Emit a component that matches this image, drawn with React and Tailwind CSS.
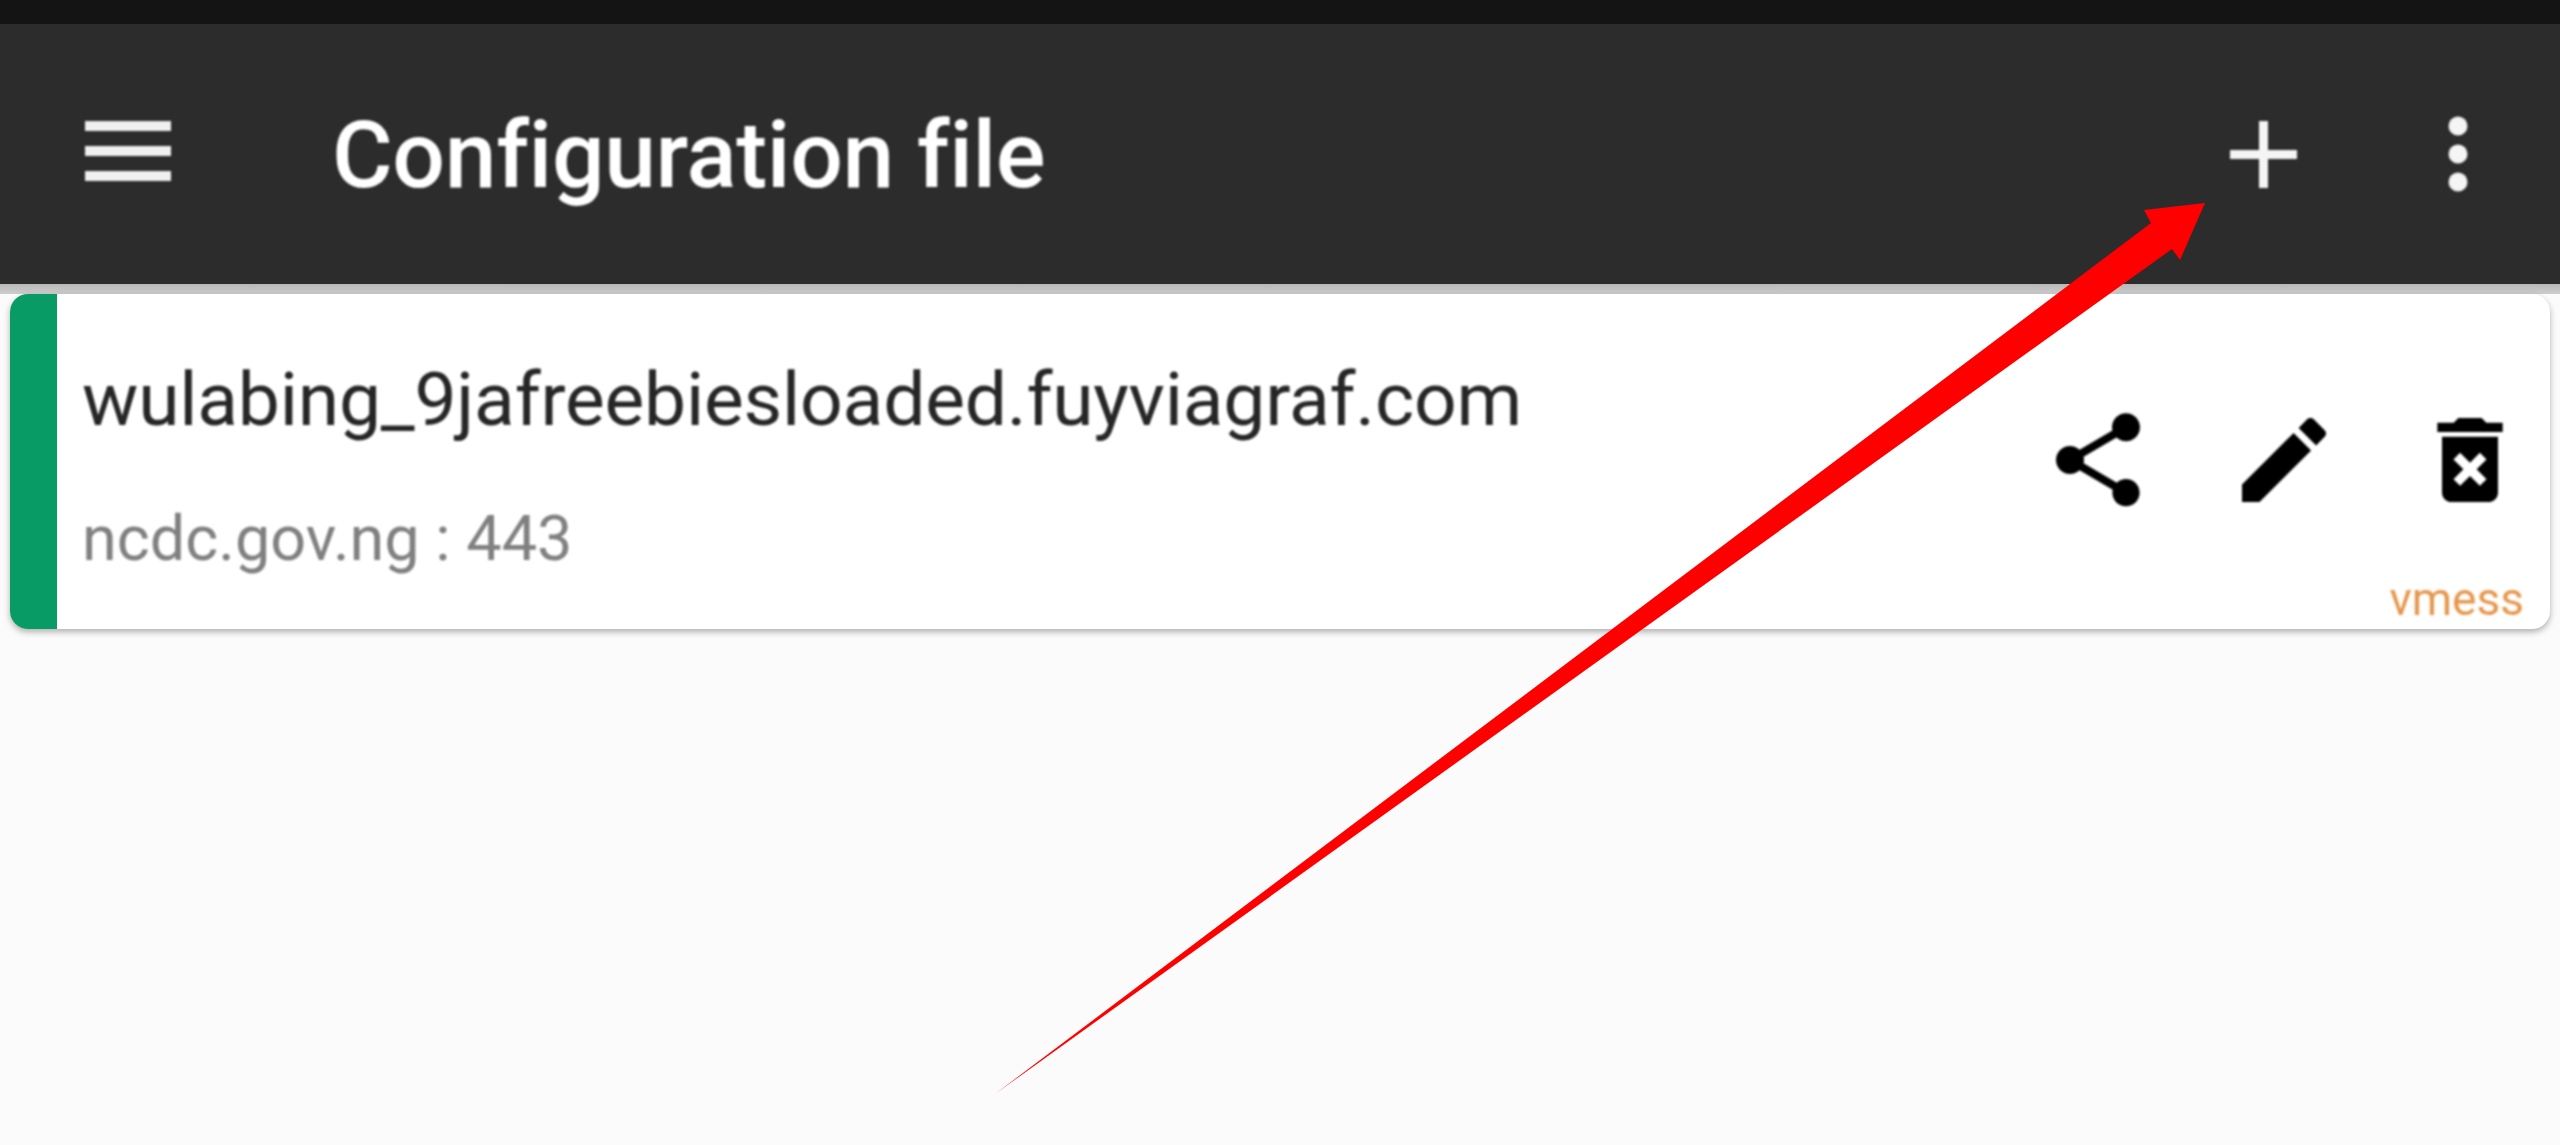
const ARROW = '2205,203 2144,210 2151,223 995,1094 2172,249 2180,260'

function ShareIcon() {
  return (
    <svg viewBox="0 0 24 24" className="w-[112px] h-[112px] fill-black">
      <path d="M18 16.08c-.76 0-1.44.3-1.96.77L8.91 12.7c.05-.23.09-.46.09-.7s-.04-.47-.09-.7l7.05-4.11c.54.5 1.25.81 2.04.81 1.66 0 3-1.34 3-3s-1.34-3-3-3-3 1.34-3 3c0 .24.04.47.09.7L8.04 9.81C7.5 9.31 6.79 9 6 9c-1.66 0-3 1.34-3 3s1.34 3 3 3c.79 0 1.5-.31 2.04-.81l7.12 4.16c-.05.21-.08.43-.08.65 0 1.61 1.31 2.92 2.92 2.92s2.92-1.31 2.92-2.92-1.31-2.92-2.92-2.92z" />
    </svg>
  )
}

function EditIcon() {
  return (
    <svg viewBox="0 0 24 24" className="w-[112px] h-[112px] fill-black">
      <path d="M3 17.25V21h3.75L17.81 9.94l-3.75-3.75L3 17.25zM20.71 7.04c.39-.39.39-1.02 0-1.41l-2.34-2.34c-.39-.39-1.02-.39-1.41 0l-1.83 1.83 3.75 3.75 1.83-1.83z" />
    </svg>
  )
}

function DeleteIcon() {
  return (
    <svg viewBox="0 0 24 24" className="w-[112px] h-[112px] fill-black">
      <path d="M6 19c0 1.1.9 2 2 2h8c1.1 0 2-.9 2-2V7H6v12zm2.46-7.12l1.41-1.41L12 12.59l2.12-2.12 1.41 1.41L13.41 14l2.12 2.12-1.41 1.41L12 15.41l-2.12 2.12-1.41-1.41L10.59 14l-2.13-2.12zM15.5 4l-1-1h-5l-1 1H5v2h14V4z" />
    </svg>
  )
}

export default function App() {
  return (
    <div className="relative h-[1145px] overflow-hidden bg-[#fbfbfb] font-['Roboto',sans-serif]">
      <div className="h-[24px] bg-[#141414]" />

      <header className="h-[260px] bg-[#2c2c2c] flex items-center text-white">
        <svg viewBox="0 0 86 63" className="ml-[85px] -mt-[5px] w-[86px] h-[63px] fill-[#f0f0f0] blur-[1px]">
          <rect x="0" y="1" width="86" height="10" />
          <rect x="0" y="26" width="86" height="10" />
          <rect x="0" y="51" width="86" height="10" />
        </svg>
        <h1 className="ml-[161px] mt-[2px] text-[93px] tracking-[-0.004em] leading-none font-medium blur-[1px]">Configuration file</h1>
        <div className="ml-auto flex items-center mr-[92px] gap-[151px] blur-[1px]">
          <svg viewBox="0 0 67 67" className="w-[67px] h-[67px] fill-[#f5f5f5]">
            <rect x="0" y="29" width="67" height="9" />
            <rect x="29" y="0" width="9" height="67" />
          </svg>
          <svg viewBox="0 0 20 76" className="w-[20px] h-[76px] fill-[#f5f5f5]">
            <circle cx="10" cy="10" r="9.5" />
            <circle cx="10" cy="38" r="9.5" />
            <circle cx="10" cy="66" r="9.5" />
          </svg>
        </div>
      </header>

      <div className="h-[10px] bg-linear-to-b from-[#b8b8b8] to-[#cdcdcd]" />

      <div className="relative mx-[10px] h-[335px] flex rounded-[18px] overflow-hidden bg-white shadow-[0_3px_6px_rgba(0,0,0,0.3)]">
        <div className="w-[47px] bg-[#089b66]" />
        <div className="ml-[25px] flex flex-col blur-[0.8px]">
          <div className="mt-[63px] text-[75px] tracking-[-0.003em] leading-[84px] text-[#262626]">wulabing_9jafreebiesloaded.fuyviagraf.com</div>
          <div className="mt-[64px] text-[63px] leading-[68px] text-[#808080]">ncdc.gov.ng : 443</div>
        </div>
        <div className="ml-auto mr-[24px] -mt-[3px] flex items-center gap-[74px] blur-[0.8px]">
          <ShareIcon />
          <EditIcon />
          <DeleteIcon />
        </div>
        <span className="absolute right-[26px] bottom-[5px] text-[46px] leading-[50px] text-[#e5974c] blur-[0.8px]">vmess</span>
      </div>

      <svg viewBox="0 0 2560 1145" className="absolute inset-0 w-[2560px] h-[1145px] pointer-events-none">
        <polygon points={ARROW} fill="#ff0000" />
      </svg>
    </div>
  )
}
